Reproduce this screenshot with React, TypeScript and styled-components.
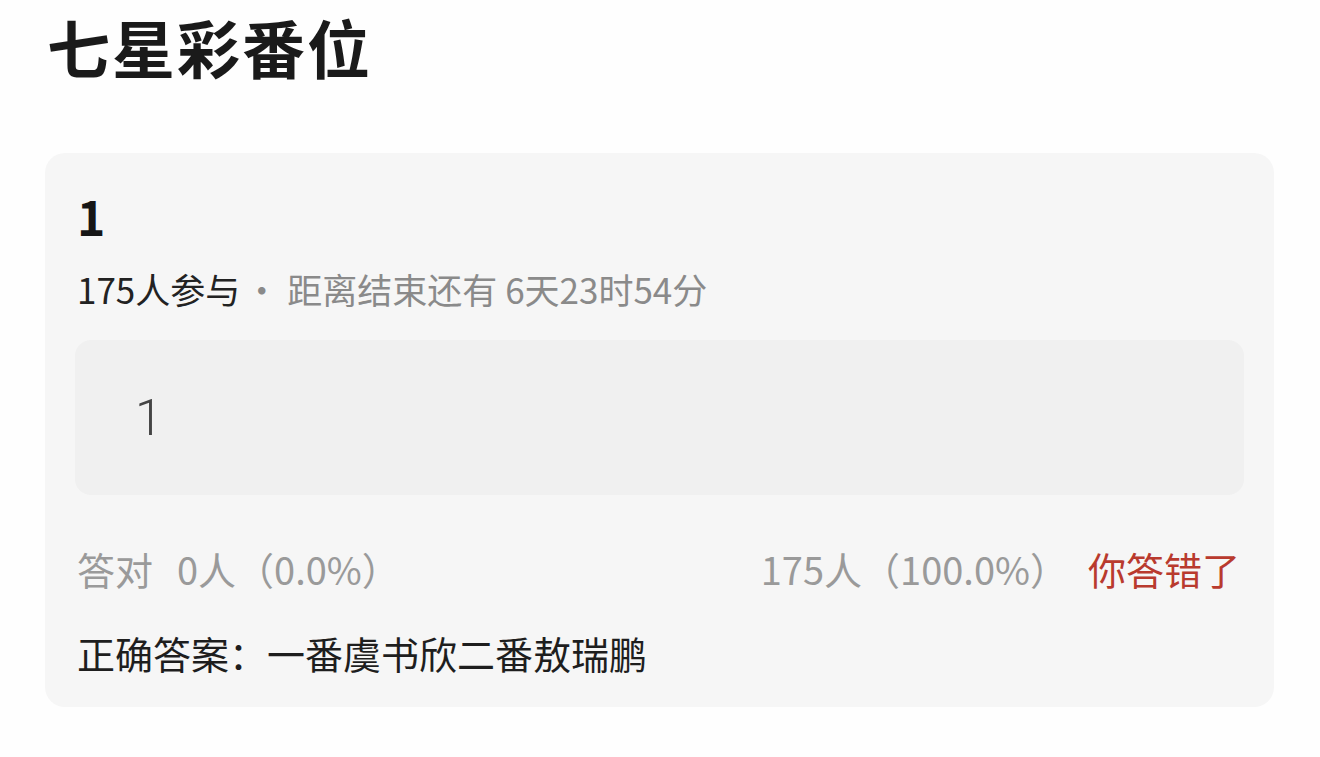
import React from "react";
import styled, { createGlobalStyle } from "styled-components";

const GlobalStyle = createGlobalStyle`
  html, body {
    margin: 0;
    padding: 0;
    background: #fefefe;
  }
  body {
    font-family: "Noto Sans CJK SC", "Noto Sans", sans-serif;
    color: #1f1f1f;
  }
`;

const Page = styled.div`
  width: 1320px;
  min-height: 757px;
  padding: 0 0 0 45px;
  box-sizing: border-box;
`;

const Title = styled.h1`
  margin: 0 0 0 2px;
  font-size: 63px;
  line-height: 91px;
  font-weight: 700;
  color: #1a1a1a;
  letter-spacing: 2px;
`;

const Card = styled.section`
  margin-top: 62px;
  width: 1229px;
  height: 554px;
  box-sizing: border-box;
  padding: 34px 30px 0 30px;
  background: #f6f6f6;
  border-radius: 20px;
`;

const QuestionNo = styled.div`
  padding-left: 2px;
  font-size: 48px;
  line-height: 56px;
  font-weight: 700;
  color: #161616;
`;

const Meta = styled.div`
  margin-top: 22px;
  padding-left: 2px;
  font-size: 35px;
  line-height: 48px;
  color: #8a8a8a;
`;

const Strong = styled.span`
  color: #222;
`;

const Dot = styled.span`
  margin: 0 8px 0 4px;
`;

const AnswerBox = styled.div`
  margin-top: 27px;
  height: 155px;
  border-radius: 16px;
  background: #f0f0f0;
  display: flex;
  align-items: center;
  padding-left: 60px;
  font-family: Roboto, "Noto Sans CJK SC", sans-serif;
  font-size: 50px;
  font-weight: 300;
  color: #444;
`;

const StatsRow = styled.div`
  margin-top: 50px;
  display: flex;
  justify-content: space-between;
  align-items: center;
  padding: 0 4px 0 2px;
  font-size: 38px;
  line-height: 48px;
  color: #9a9a9a;
`;

const Group = styled.div`
  display: flex;
  align-items: center;
  gap: 20px;
`;

const Gap = styled.span`
  display: inline-block;
  width: 24px;
`;

const Verdict = styled.span<{ $wrong?: boolean }>`
  color: ${(p) => (p.$wrong ? "#b93a2e" : "#2e9a4a")};
`;

const Solution = styled.div`
  margin-top: 36px;
  padding-left: 2px;
  font-size: 38px;
  line-height: 48px;
  color: #1e1e1e;
`;

export default function App() {
  return (
    <>
      <GlobalStyle />
      <Page>
        <Title>七星彩番位</Title>
        <Card>
          <QuestionNo>1</QuestionNo>
          <Meta>
            <Strong>175人参与</Strong>
            <Dot>·</Dot>距离结束还有 6天23时54分
          </Meta>
          <AnswerBox>1</AnswerBox>
          <StatsRow>
            <span>
              答对<Gap />0人（0.0%）
            </span>
            <Group>
              <span>175人（100.0%）</span>
              <Verdict $wrong>你答错了</Verdict>
            </Group>
          </StatsRow>
          <Solution>正确答案：一番虞书欣二番敖瑞鹏</Solution>
        </Card>
      </Page>
    </>
  );
}
